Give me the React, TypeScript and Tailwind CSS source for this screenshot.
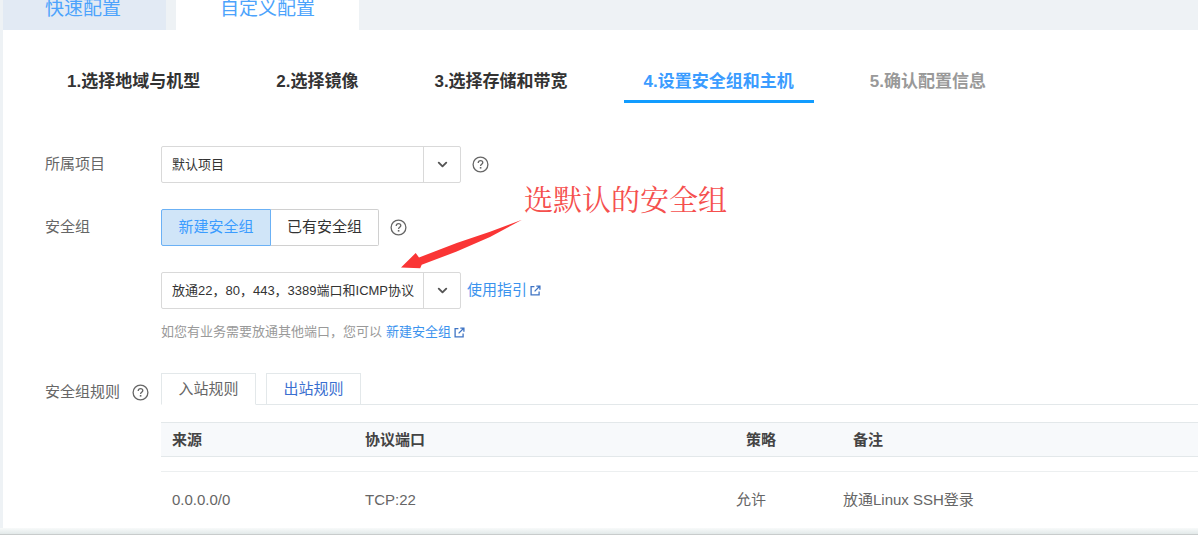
import { useState } from "react";
import type { ReactNode } from "react";
import clsx from "clsx";
import { ChevronDown } from "lucide-react";

const steps = [
  "选择地域与机型",
  "选择镜像",
  "选择存储和带宽",
  "设置安全组和主机",
  "确认配置信息",
];

const currentStep = 3;

const rules = [
  { source: "0.0.0.0/0", port: "TCP:22", policy: "允许", remark: "放通Linux SSH登录" },
];

function HelpButton({ label }: { label: string }) {
  return (
    <button type="button" aria-label={label} className="text-[#666]">
      <svg viewBox="0 0 17 17" className="size-[17px]" fill="none" stroke="currentColor" strokeWidth="1.3">
        <circle cx="8.5" cy="8.5" r="7.4" />
        <path d="M6.2 6.9c0-1.4 1-2.3 2.3-2.3s2.3.8 2.3 2c0 1.7-2.2 1.8-2.2 3.4" />
        <path d="M8.6 11v1.6" strokeWidth="1.6" />
      </svg>
    </button>
  );
}

function ExternalIcon() {
  return (
    <svg viewBox="0 0 11 11" className="size-[11px]" fill="none" stroke="#3f74c4" strokeWidth="1.3">
      <path d="M4.4 1.6H1.1v8.3h8V6.6" />
      <path d="M6.3 1.1h3.6v3.6M9.7 1.3 4.6 6.4" />
    </svg>
  );
}

function SelectBox({ id, label, children }: { id: string; label?: string; children: ReactNode }) {
  return (
    <div className="relative w-[300px]">
      <select
        id={id}
        aria-label={label}
        className="block h-[37px] w-full appearance-none rounded-xs border border-[#d9d9d9] bg-white pl-2.5 pr-10 text-[13px] text-[#333]"
      >
        {children}
      </select>
      <span className="pointer-events-none absolute inset-y-0 right-0 flex w-[38px] items-center justify-center border-l border-[#d9d9d9]">
        <ChevronDown size={15} strokeWidth={3} className="text-[#555]" />
      </span>
    </div>
  );
}

export default function App() {
  const [group, setGroup] = useState("new");
  const [direction, setDirection] = useState("in");

  return (
    <div
      lang="zh-CN"
      className="overflow-hidden bg-[#eef2f5] pl-[3px] font-['Liberation_Sans','Noto_Sans_CJK_SC',sans-serif] text-[15px] text-[#666]"
    >
      {/* config mode tabs */}
      <div className="flex h-[30px] text-[19px] leading-[18px] text-[#4ca3fc]">
        <button type="button" className="flex w-[163px] items-start bg-[#e2eaf4] pl-[42px]">
          快速配置
        </button>
        <button type="button" className="ml-2.5 flex w-[183px] items-start justify-center bg-white">
          自定义配置
        </button>
      </div>

      <main className="bg-white">
        {/* steps */}
        <ol className="flex gap-9 pl-11 pt-[34px] text-[17px] font-bold leading-9">
          {steps.map((step, i) => (
            <li
              key={step}
              className={clsx(
                "whitespace-nowrap border-b-3 px-5",
                i === currentStep ? "border-[#119cff] text-[#3b9cff]" : "border-transparent",
                i < currentStep && "text-[#333]",
                i > currentStep && "text-[#999]"
              )}
            >
              {i + 1}.{step}
            </li>
          ))}
        </ol>

        {/* form */}
        <form className="relative flex flex-col gap-[26px] pl-[42px] pt-[43px]">
          <div className="flex items-center">
            <label htmlFor="project" className="w-[116px]">
              所属项目
            </label>
            <SelectBox id="project">
              <option>默认项目</option>
            </SelectBox>
            <div className="ml-[11px] flex">
              <HelpButton label="项目说明" />
            </div>
          </div>

          <div className="flex items-center">
            <span className="w-[116px]">安全组</span>
            <div className="flex h-[37px]">
              <button
                type="button"
                onClick={() => setGroup("new")}
                className={clsx(
                  "w-[110px] rounded-l-xs border",
                  group === "new" ? "border-[#6bb1f5] bg-[#d0e5f8] text-[#3b9cff]" : "border-[#d0d0d0] text-[#333]"
                )}
              >
                新建安全组
              </button>
              <button
                type="button"
                onClick={() => setGroup("existing")}
                className={clsx(
                  "w-[108px] rounded-r-xs border border-l-0",
                  group === "existing" ? "border-[#6bb1f5] bg-[#d0e5f8] text-[#3b9cff]" : "border-[#d0d0d0] text-[#333]"
                )}
              >
                已有安全组
              </button>
            </div>
            <div className="ml-[11px] flex">
              <HelpButton label="安全组说明" />
            </div>
          </div>

          <div className="pl-[116px]">
            <div className="flex items-center">
              <SelectBox id="template" label="安全组模板">
                <option>放通22，80，443，3389端口和ICMP协议</option>
              </SelectBox>
              <a href="#" className="ml-1.5 flex items-center gap-[3px] text-[#3b93ee]">
                使用指引
                <ExternalIcon />
              </a>
            </div>
            <p className="mt-[13px] flex items-center text-[13px] leading-5 text-[#999]">
              如您有业务需要放通其他端口，您可以
              <a href="#" className="ml-1 flex items-center gap-[3px] text-[#3b93ee]">
                新建安全组
                <ExternalIcon />
              </a>
            </p>
          </div>

          {/* annotation */}
          <div className="pointer-events-none absolute left-[396px] top-[76px]">
            <p className="pl-[125px] font-['Noto_Serif_CJK_SC','Noto_Sans_CJK_SC',serif] text-[29px] leading-10 text-[#f5504e]">
              选默认的安全组
            </p>
            <svg viewBox="0 0 126 54" className="-mt-px h-[54px] w-[126px]" fill="#fa3535">
              <path d="M2 49.5 16.7 35 20 39.5 57.7 25 91 13.8 123 1.8 91 19 57.7 33.5 22.7 46.800 21.200 50.300z" />
            </svg>
          </div>
        </form>

        {/* security group rules */}
        <section className="flex pl-[42px] pt-[31px]">
          <div className="flex h-[38px] w-[116px] items-center gap-3">
            安全组规则
            <HelpButton label="规则说明" />
          </div>
          <div className="flex-1">
            <div className="flex h-8">
              <button
                type="button"
                onClick={() => setDirection("in")}
                className={clsx(
                  "w-[95px] border border-[#e3e8ea]",
                  direction === "in" ? "border-b-transparent text-[#666]" : "text-[#3a6fd0]"
                )}
              >
                入站规则
              </button>
              <div className="w-2.5 border-b border-[#e3e8ea]" />
              <button
                type="button"
                onClick={() => setDirection("out")}
                className={clsx(
                  "w-[95px] border border-[#e3e8ea]",
                  direction === "out" ? "border-b-transparent text-[#666]" : "text-[#3a6fd0]"
                )}
              >
                出站规则
              </button>
              <div className="flex-1 border-b border-[#e3e8ea]" />
            </div>

            <table className="mt-[17px] w-full table-fixed text-left">
              <colgroup>
                <col className="w-[193px]" />
                <col className="w-[371px]" />
                <col className="w-[107px]" />
                <col />
              </colgroup>
              <thead>
                <tr className="h-[34px] border-y border-[#e3e8ea] bg-[#f7f9fb] text-[#444]">
                  <th className="pl-[11px] pt-0.5">来源</th>
                  <th className="pl-[11px] pt-0.5">协议端口</th>
                  <th className="pl-[21px] pt-0.5">策略</th>
                  <th className="pl-[21px] pt-0.5">备注</th>
                </tr>
              </thead>
              <tbody>
                <tr aria-hidden="true" className="h-[15px] border-b border-[#eceff0]">
                  <td colSpan={4} />
                </tr>
                {rules.map((rule) => (
                  <tr key={rule.port} className="h-14">
                    <td className="pl-[11px]">{rule.source}</td>
                    <td className="pl-[11px]">{rule.port}</td>
                    <td className="pl-[11px]">{rule.policy}</td>
                    <td className="pl-[11px]">{rule.remark}</td>
                  </tr>
                ))}
              </tbody>
            </table>
          </div>
        </section>
      </main>
      <div className="-ml-[3px] h-[7px] border-b border-[#c8cccc] bg-linear-to-b from-[#f8fafa] to-[#e2e9e9]" />
    </div>
  );
}
